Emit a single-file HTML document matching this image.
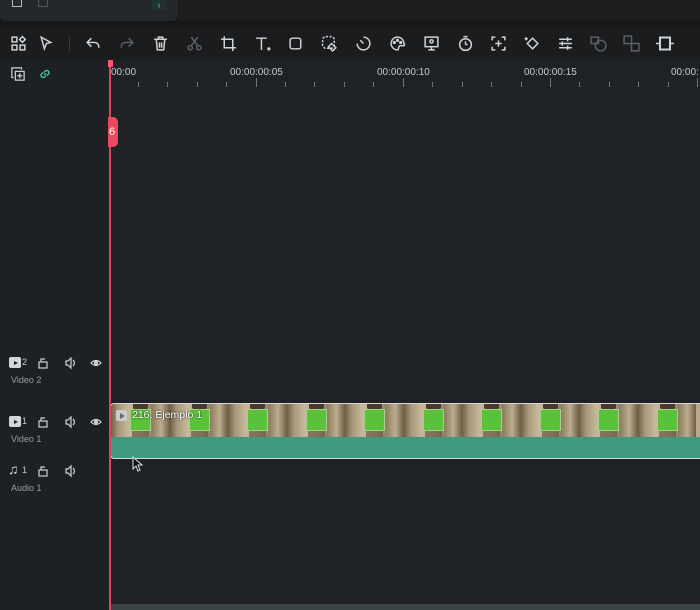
<!DOCTYPE html>
<html><head><style>
*{margin:0;padding:0;box-sizing:border-box}
body{width:700px;height:610px;background:#1f2225;font-family:"Liberation Sans",sans-serif;position:relative;overflow:hidden;color:#c9cccf}
.a{position:absolute}
.ic{position:absolute;top:35px;width:17px;height:17px}
.ic svg{width:17px;height:17px;stroke:#d0d3d6;fill:none;stroke-width:1.4}
.dim svg{stroke:#5c6064}
.tl{position:absolute;font-size:10px;color:#c8cbce;top:67px}
.tick{position:absolute;top:82px;width:1px;height:5px;background:#70757a}
.big{top:78px;height:9px}
.cell{position:absolute;top:0;height:33px;width:58.5px;background:linear-gradient(90deg,#6f5f45 0,#a8987a 12%,#c6b898 30%,#b3a486 55%,#8f7e60 70%,#bcad8e 85%,#6e5d42 100%)}
.cell .g{position:absolute;left:19px;top:5px;width:21px;height:22px;background:#5ac23a;border:1px solid #a9cf8c}
.cell .h{position:absolute;left:22px;top:0;width:15px;height:6px;background:#4a3a2e;border-radius:0 0 3px 3px}
.cell .l{position:absolute;left:21px;top:27px;width:17px;height:6px;background:#5a4e38;opacity:.6}
.lab{position:absolute;font-size:9px;color:#9a9ea2}
</style></head><body>
<div class="a" style="left:0;top:0;width:700px;height:27px;background:#151719"></div>
<div class="a" style="left:0;top:0;width:178px;height:21px;background:#25282b;border-radius:0 0 6px 6px"></div>
<div class="a" style="left:178px;top:0;width:522px;height:21px;background:#1b1d1f"></div>
<div class="a" style="left:12px;top:0;width:10px;height:7px;border:1.5px solid #bbb;border-top:none"></div>
<div class="a" style="left:38px;top:0;width:10px;height:7px;border:1.5px solid #555;border-top:none"></div>
<div class="a" style="left:152px;top:0;width:14px;height:10px;background:#1f3330;color:#4fc6a6;font-size:9px;text-align:center">‹</div>
<div class="a" style="left:0;top:27px;width:700px;height:33px;background:#1a1c1e"></div>
<div class="a" style="left:69px;top:37px;width:1px;height:14px;background:#3a3d40"></div>

<div class="ic" style="left:10px"><svg viewBox="0 0 16 16"><rect x="2" y="2" width="4.5" height="4.5"/><rect x="2" y="9.5" width="4.5" height="4.5"/><rect x="9.5" y="9.5" width="4.5" height="4.5"/><path d="M11.7 1.5l2.7 2.7-2.7 2.7-2.7-2.7z"/></svg></div>
<div class="ic" style="left:38px"><svg viewBox="0 0 16 16"><path d="M3 2l9 5-4 1-2 5z"/></svg></div>
<div class="ic" style="left:85px"><svg viewBox="0 0 16 16"><path d="M6 3L2 7l4 4M2 7h7a4 4 0 014 4v1"/></svg></div>
<div class="ic dim" style="left:118px"><svg viewBox="0 0 16 16"><path d="M10 3l4 4-4 4M14 7H7a4 4 0 00-4 4v1"/></svg></div>
<div class="ic" style="left:152px"><svg viewBox="0 0 16 16"><path d="M2 4h12M6 4V2h4v2M4 4l1 10h6l1-10M7 7v5M9 7v5"/></svg></div>
<div class="ic dim" style="left:186px"><svg viewBox="0 0 16 16"><circle cx="4" cy="12" r="2"/><circle cx="12" cy="12" r="2"/><path d="M5 10l6-8M11 10L5 2"/></svg></div>
<div class="ic" style="left:220px"><svg viewBox="0 0 16 16"><path d="M4 1v11h11M1 4h11v11"/></svg></div>
<div class="ic" style="left:254px"><svg viewBox="0 0 16 16"><path d="M2 3h10M7 3v11"/><circle cx="14" cy="13" r=".8"/></svg></div>
<div class="ic" style="left:288px"><svg viewBox="0 0 16 16"><rect x="2" y="3" width="10" height="10" rx="2"/></svg></div>
<div class="ic" style="left:321px"><svg viewBox="0 0 16 16" stroke-dasharray="2 1.5"><rect x="1.5" y="1.5" width="11" height="11" rx="3"/><path d="M10 8l4 4-3 3-4-4z" stroke-dasharray="none"/></svg></div>
<div class="ic" style="left:355px"><svg viewBox="0 0 16 16"><path d="M8 2a6 6 0 11-6 6M8 8L5 5"/></svg></div>
<div class="ic" style="left:389px"><svg viewBox="0 0 16 16"><path d="M8 2a6 6 0 100 12c1 0 1-1 1-2s1-2 2-2h2a1 1 0 001-2 6 6 0 00-6-6z"/><circle cx="5" cy="7" r=".8"/><circle cx="8" cy="5" r=".8"/><circle cx="11" cy="7" r=".8"/></svg></div>
<div class="ic" style="left:423px"><svg viewBox="0 0 16 16"><rect x="2" y="2" width="12" height="9"/><circle cx="8" cy="6" r="1.5"/><path d="M8 11v3M5 14h6"/></svg></div>
<div class="ic" style="left:457px"><svg viewBox="0 0 16 16"><circle cx="8" cy="9" r="5.5"/><path d="M6 1.5h4M8 9V6M8 9h2"/></svg></div>
<div class="ic" style="left:490px"><svg viewBox="0 0 16 16"><path d="M2 5V2h3M11 2h3v3M14 11v3h-3M5 14H2v-3M8 5v6M5 8h6"/></svg></div>
<div class="ic" style="left:523px"><svg viewBox="0 0 16 16"><path d="M9 3l5 5-5 5-5-5zM3 2v3M1.5 3.5h3"/></svg></div>
<div class="ic" style="left:557px"><svg viewBox="0 0 16 16"><path d="M2 4h12M2 8h12M2 12h12M10 2v4M5 6v4M10 10v4"/></svg></div>
<div class="ic dim" style="left:590px"><svg viewBox="0 0 16 16"><rect x="1" y="2" width="7" height="6"/><circle cx="10" cy="10" r="5"/></svg></div>
<div class="ic dim" style="left:623px"><svg viewBox="0 0 16 16"><rect x="1" y="1" width="7" height="7"/><rect x="8" y="8" width="7" height="7"/></svg></div>
<div class="ic" style="left:655px;width:20px"><svg viewBox="0 0 20 16" style="width:20px"><rect x="5" y="2" width="10" height="12" stroke-width="2"/><path d="M1 8h3M16 8h3"/></svg></div>

<div class="a" style="left:0;top:60px;width:108px;height:550px;background:#1e2124"></div>
<div class="a" style="left:11px;top:67px;width:13px;height:13px"><svg viewBox="0 0 16 16" width="14" height="14" fill="none" stroke="#cfd2d5" stroke-width="1.4"><rect x="5" y="5" width="10" height="10"/><path d="M3 12H1V1h11v2M10 7v6M7 10h6"/></svg></div>
<div class="a" style="left:38px;top:67px"><svg viewBox="0 0 16 16" width="14" height="14" fill="none" stroke="#45c39c" stroke-width="1.6"><path d="M7 9l2-2M6 6L4 8a2.5 2.5 0 003.5 3.5L9 10M10 10l2-2a2.5 2.5 0 00-3.5-3.5L7 6"/></svg></div>

<div class="a" style="left:9px;top:357px;width:12px;height:11px;background:#d3d6d9;border-radius:2px"></div><div class="a" style="left:14px;top:361px;width:0;height:0;border-left:4px solid #1e2124;border-top:2.5px solid transparent;border-bottom:2.5px solid transparent"></div>
<div class="a" style="left:22px;top:357px;font-size:9px">2</div>
<div class="a" style="left:9px;top:416px;width:12px;height:11px;background:#d3d6d9;border-radius:2px"></div><div class="a" style="left:14px;top:420px;width:0;height:0;border-left:4px solid #1e2124;border-top:2.5px solid transparent;border-bottom:2.5px solid transparent"></div>
<div class="a" style="left:22px;top:416px;font-size:9px">1</div>
<div class="a" style="left:8px;top:461px;font-size:14px;color:#d3d6d9">♫</div><div class="a" style="left:22px;top:465px;font-size:9px">1</div>
<div class="lab" style="left:11px;top:375px">Video 2</div>
<div class="lab" style="left:11px;top:434px">Video 1</div>
<div class="lab" style="left:11px;top:483px">Audio 1</div>
<svg class="a" style="left:38px;top:357px" width="70" height="130" fill="none" stroke="#cfd2d5" stroke-width="1.2">
<g><rect x="1" y="5" width="8" height="6"/><path d="M3 5V2h4"/></g>
<g transform="translate(0,59)"><rect x="1" y="5" width="8" height="6"/><path d="M3 5V2h4"/></g>
<g transform="translate(0,108)"><rect x="1" y="5" width="8" height="6"/><path d="M3 5V2h4"/></g>
<g transform="translate(27,0)"><path d="M1 4h2l3-3v10L3 8H1zM8 3a4 4 0 010 6"/></g>
<g transform="translate(27,59)"><path d="M1 4h2l3-3v10L3 8H1zM8 3a4 4 0 010 6"/></g>
<g transform="translate(27,108)"><path d="M1 4h2l3-3v10L3 8H1zM8 3a4 4 0 010 6"/></g>
<g transform="translate(52,0)"><path d="M1 6q5-5 10 0q-5 5-10 0z"/><circle cx="6" cy="6" r="1.5" fill="#cfd2d5"/></g>
<g transform="translate(52,59)"><path d="M1 6q5-5 10 0q-5 5-10 0z"/><circle cx="6" cy="6" r="1.5" fill="#cfd2d5"/></g>
</svg>

<div class="tl" style="left:111px">00:00</div>
<div class="tl" style="left:230px">00:00:00:05</div>
<div class="tl" style="left:377px">00:00:00:10</div>
<div class="tl" style="left:524px">00:00:00:15</div>
<div class="tl" style="left:671px">00:00:</div>
<div class="tick" style="left:138px"></div><div class="tick" style="left:167px"></div><div class="tick" style="left:197px"></div><div class="tick" style="left:226px"></div><div class="tick big" style="left:256px"></div>
<div class="tick" style="left:285px"></div><div class="tick" style="left:314px"></div><div class="tick" style="left:344px"></div><div class="tick" style="left:373px"></div><div class="tick big" style="left:403px"></div>
<div class="tick" style="left:432px"></div><div class="tick" style="left:462px"></div><div class="tick" style="left:491px"></div><div class="tick" style="left:521px"></div><div class="tick big" style="left:550px"></div>
<div class="tick" style="left:579px"></div><div class="tick" style="left:609px"></div><div class="tick" style="left:638px"></div><div class="tick" style="left:668px"></div><div class="tick big" style="left:697px"></div>

<div class="a" style="left:110px;top:403px;width:600px;height:56px;border:1.5px solid #d5d8da;border-radius:4px;background:#3f9a80;overflow:hidden">
 <div class="a" style="left:0;top:0;width:600px;height:33px;background:#b9a98a">
  <div class="cell" style="left:0"><div class="h"></div><div class="g"></div><div class="l"></div></div>
  <div class="cell" style="left:58.5px"><div class="h"></div><div class="g"></div><div class="l"></div></div>
  <div class="cell" style="left:117px"><div class="h"></div><div class="g"></div><div class="l"></div></div>
  <div class="cell" style="left:175.5px"><div class="h"></div><div class="g"></div><div class="l"></div></div>
  <div class="cell" style="left:234px"><div class="h"></div><div class="g"></div><div class="l"></div></div>
  <div class="cell" style="left:292.5px"><div class="h"></div><div class="g"></div><div class="l"></div></div>
  <div class="cell" style="left:351px"><div class="h"></div><div class="g"></div><div class="l"></div></div>
  <div class="cell" style="left:409.5px"><div class="h"></div><div class="g"></div><div class="l"></div></div>
  <div class="cell" style="left:468px"><div class="h"></div><div class="g"></div><div class="l"></div></div>
  <div class="cell" style="left:526.5px"><div class="h"></div><div class="g"></div><div class="l"></div></div>
 </div>
 <div class="a" style="left:5px;top:6px;width:11px;height:11px;background:#ccc;border-radius:2px"></div>
 <div class="a" style="left:9px;top:9px;border-left:5px solid #666;border-top:3px solid transparent;border-bottom:3px solid transparent"></div>
 <div class="a" style="left:21px;top:5px;font-size:10.5px;color:#fff;text-shadow:0 0 2px #000">216. Ejemplo 1</div>
</div>
<svg class="a" style="left:132px;top:456px" width="12" height="16"><path d="M1 1v12l3-3 2 5 2-1-2-5h4z" fill="#111" stroke="#ddd" stroke-width="1"/></svg>

<div class="a" style="left:109px;top:60px;width:1.5px;height:550px;background:#d9485a"></div>
<div class="a" style="left:108px;top:60px;width:5px;height:7px;background:#ff5670;border-radius:1px"></div>
<div class="a" style="left:108px;top:117px;width:10px;height:30px;background:#e94a5d;border-radius:0 5px 5px 0;color:#fff;font-size:11px;line-height:30px;padding-left:1px">6</div>
<div class="a" style="left:111px;top:604px;width:589px;height:6px;background:#3c4546"></div>
</body></html>
